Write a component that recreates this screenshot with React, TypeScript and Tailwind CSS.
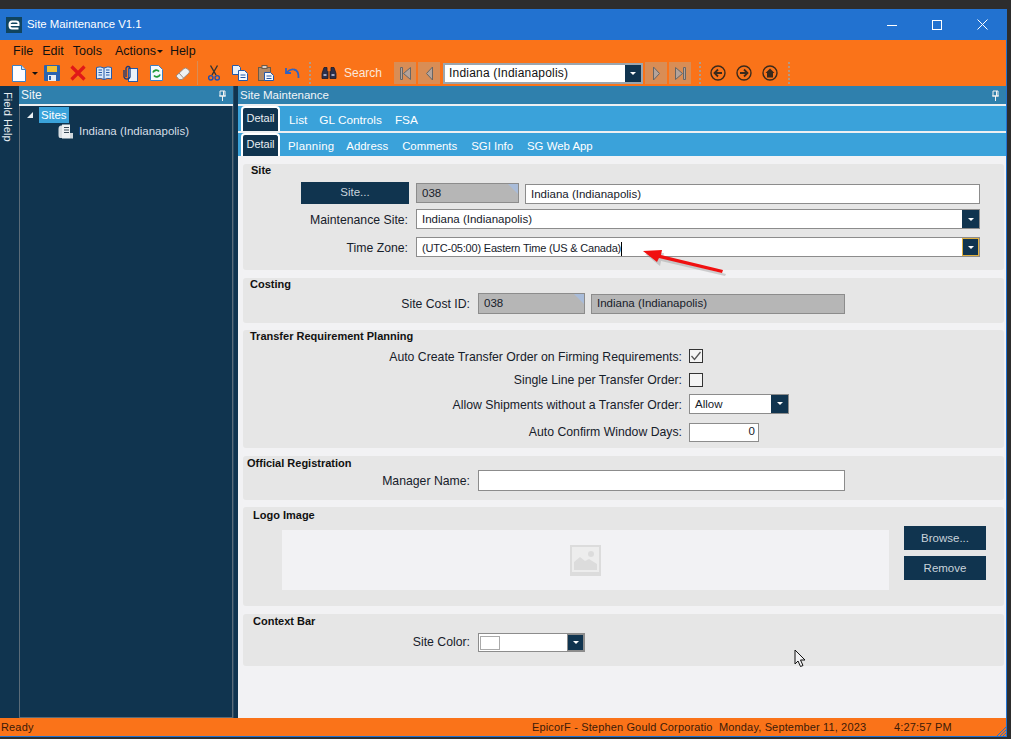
const navy = "bg-[#10344f]";

const Caret = ({ className = "border-t-white" }: { className?: string }) => (
  <span className={`block w-0 h-0 border-x-[3px] border-x-transparent border-t-[3px] ${className}`} />
);

const DropButton = ({ focus = false, className = "w-[17px]" }: { focus?: boolean; className?: string }) => (
  <span className={`flex items-center justify-center self-stretch shrink-0 ${navy} ${className} ${focus ? "border border-[#e0b040]" : ""}`}>
    <Caret />
  </span>
);

const Corner = () => (
  <span className="absolute top-0 right-0 w-0 h-0 border-l-[10px] border-l-transparent border-t-[10px] border-t-[#a9bcd9]" />
);

const Field = ({ text, className, gray = false, corner = false }: { text?: string; className: string; gray?: boolean; corner?: boolean }) => (
  <div className={`relative flex items-center shrink-0 border border-[#8c8c8c] pl-[5px] pt-[1px] text-[11.5px] ${gray ? "bg-[#b6b6b6]" : "bg-white"} ${className}`}>
    {text}
    {corner && <Corner />}
  </div>
);

const Combo = ({ text, className, focus = false, caret = false, textClass = "text-[11.5px]" }: { text?: string; className: string; focus?: boolean; caret?: boolean; textClass?: string }) => (
  <div className={`flex items-center shrink-0 border border-[#8c8c8c] bg-white ${className}`}>
    <span className={`flex-1 pl-[5px] pt-[1px] whitespace-nowrap ${textClass}`}>
      {text}
      {caret && <span className="inline-block w-px h-[14px] bg-black align-middle" />}
    </span>
    <DropButton focus={focus} />
  </div>
);

const Group = ({ title, className, titleClass, children }: { title: string; className: string; titleClass: string; children?: React.ReactNode }) => (
  <section className={`ml-[5px] w-[761px] bg-[#e6e6e6] rounded-[3px] shrink-0 text-[12.25px] ${className}`}>
    <h3 className={`font-bold text-[11px] leading-[13px] text-[#111] ${titleClass}`}>{title}</h3>
    {children}
  </section>
);

const Row = ({ label, labelWidth, className = "", labelClass = "pt-[2px]", children }: { label: string; labelWidth: string; className?: string; labelClass?: string; children: React.ReactNode }) => (
  <div className={`flex items-center ${className}`}>
    <span className={`text-right whitespace-nowrap shrink-0 ${labelWidth} ${labelClass}`}>{label}</span>
    {children}
  </div>
);

const Pin = () => (
  <svg width="9" height="11" viewBox="0 0 9 11" className="shrink-0">
    <path d="M2 1h5v5H2zM1 6h7M4.500 6v5M5.500 1v5" fill="none" stroke="#f2f2f2" strokeWidth="1" />
  </svg>
);

const Tab = ({ active = false, children, className = "" }: { active?: boolean; children: React.ReactNode; className?: string }) =>
  active ? (
    <div className={`flex items-center justify-center w-[39px] self-stretch ${navy} border-2 border-b-0 border-white rounded-t-[4px] text-[11px] text-[#e8eef2] pb-[3px] ${className}`}>
      {children}
    </div>
  ) : (
    <span className={`text-white whitespace-nowrap pt-[5px] ${className}`}>{children}</span>
  );

const NavBtn = ({ d, flip = false, className = "" }: { d: string; flip?: boolean; className?: string }) => (
  <span className={`flex items-center justify-center w-[22px] h-[22px] bg-[#d98d55] shrink-0 ${className}`}>
    <svg width="13" height="15" viewBox="0 0 13 15" className={flip ? "-scale-x-100" : ""}>
      <path d={d} fill="#b4a39a" stroke="#666" strokeWidth="1" />
    </svg>
  </span>
);

const CircleIcon = ({ children, className = "" }: { children: React.ReactNode; className?: string }) => (
  <svg width="16" height="16" viewBox="0 0 16 16" className={`shrink-0 ${className}`}>
    <circle cx="8" cy="8" r="7" fill="none" stroke="#3a2a1c" strokeWidth="1.400" />
    {children}
  </svg>
);

const Grip = ({ className = "" }: { className?: string }) => (
  <span className={`w-[2px] h-[22px] shrink-0 border-l-2 border-dotted border-[#b09a88] ${className}`} />
);

export default function App() {
  return (
    <div className="relative w-[1011px] h-[739px] overflow-hidden bg-[#2d2d2d] pt-[9px] font-['Liberation_Sans',sans-serif] text-[12px] text-[#16202a]">
      <div className="flex flex-col w-[1007px] h-[728px] border-r border-b border-[#2272d0] bg-[#f2f2f4]">
        {/* title bar */}
        <header className="flex items-center h-[31px] bg-[#2272d0] text-white shrink-0">
          <svg width="16" height="16" viewBox="0 0 16 16" className="ml-[6px]">
            <rect width="16" height="16" fill="#10445f" />
            <path d="M3 8h9.500V6.500Q12.500 4.500 10 4.500H6Q3.500 4.500 3.500 8T6 11.500h6.500" fill="none" stroke="#fff" strokeWidth="2" />
          </svg>
          <span className="ml-[5px] text-[11.400px]">Site Maintenance V1.1</span>
          <svg width="10" height="10" viewBox="0 0 10 10" className="ml-auto">
            <path d="M0 5.500h10" stroke="#fff" strokeWidth="1" />
          </svg>
          <svg width="10" height="10" viewBox="0 0 10 10" className="ml-[35px]">
            <rect x="0.500" y="0.500" width="9" height="9" fill="none" stroke="#fff" />
          </svg>
          <svg width="11" height="11" viewBox="0 0 11 11" className="ml-[35px] mr-[18px]">
            <path d="M0.500 0.500l10 10M10.500 0.500l-10 10" stroke="#fff" />
          </svg>
        </header>

        {/* menu */}
        <nav className="flex items-center h-[20px] bg-[#fa7319] text-[12.500px] text-[#111] shrink-0 pt-[3px]">
          <span className="ml-[13px]">File</span>
          <span className="ml-[9px]">Edit</span>
          <span className="ml-[9px]">Tools</span>
          <span className="ml-[13px]">Actions</span>
          <Caret className="ml-[1px] border-t-[#111]" />
          <span className="ml-[7px]">Help</span>
        </nav>

        {/* toolbar */}
        <div className="flex items-center h-[26px] bg-[#fa7319] shrink-0">
          <svg width="14" height="17" viewBox="0 0 14 17" className="ml-[12px] shrink-0">
            <path d="M0.500 0.500h9l4 4v12H0.500z" fill="#fdfdff" stroke="#3b7fc4" />
            <path d="M9.500 0.500v4h4" fill="#cfe2f5" stroke="#3b7fc4" />
          </svg>
          <Caret className="ml-[6px] border-t-[#111]" />
          <svg width="16" height="16" viewBox="0 0 16 16" className="ml-[6px] shrink-0">
            <rect width="16" height="16" rx="1" fill="#2a64b0" />
            <rect x="3" y="1" width="10" height="6" fill="#f5c030" />
            <rect x="4" y="10" width="8" height="6" fill="#e8eef5" />
            <rect x="5" y="11" width="2" height="4" fill="#2a64b0" />
          </svg>
          <svg width="16" height="16" viewBox="0 0 16 16" className="ml-[10px] shrink-0">
            <path d="M1.500 1.500l13 13M14.500 1.500l-13 13" stroke="#e01818" strokeWidth="3.200" />
          </svg>
          <svg width="16" height="14" viewBox="0 0 16 14" className="ml-[10px] shrink-0">
            <path d="M8 2Q4 0 .5 1.500V13Q4 11.500 8 13.500Q12 11.500 15.500 13V1.500Q12 0 8 2z" fill="#d8e8f8" stroke="#2559a8" />
            <path d="M8 2v11M2.500 4h3.500M2.500 6.500h3.500M2.500 9h3.500M10 4h3.500M10 6.500h3.500M10 9h3.500" stroke="#2559a8" />
          </svg>
          <svg width="15" height="17" viewBox="0 0 15 17" className="ml-[11px] shrink-0">
            <rect x="5.500" y="3.500" width="9" height="13" fill="#eaf2fb" stroke="#2559a8" />
            <path d="M3 12V3.500a2 2 0 0 1 4 0V12a3.200 3.200 0 0 1-6 0V5" fill="none" stroke="#14387a" strokeWidth="1.300" />
          </svg>
          <svg width="13" height="16" viewBox="0 0 13 16" className="ml-[12px] shrink-0">
            <path d="M0.500 0.500h8l4 4v11H0.500z" fill="#f5f9fd" stroke="#3b7fc4" />
            <path d="M3 7.500a3.500 3.500 0 0 1 6-1M10 9.500a3.500 3.500 0 0 1-6 1" fill="none" stroke="#1e9a3a" strokeWidth="1.800" />
          </svg>
          <svg width="15" height="13" viewBox="0 0 15 13" className="ml-[12px] shrink-0">
            <path d="M1 9l8-7.500q1.500-1 3 0l2 2q1 1.500 0 2.500L7 12.500H4z" fill="#eef0f2" stroke="#9a8a80" />
            <path d="M4 6l4.500 5" stroke="#9a8a80" />
          </svg>
          <span className="ml-[7px] w-px h-[24px] bg-[#d98d55] shrink-0" />
          <svg width="12" height="16" viewBox="0 0 12 16" className="ml-[10px] shrink-0">
            <path d="M2.500 0.500L8 10M9.500 0.500L4 10" stroke="#333" strokeWidth="1.400" />
            <circle cx="2.800" cy="12.800" r="2.200" fill="none" stroke="#1b4fb5" strokeWidth="1.400" />
            <circle cx="9.200" cy="12.800" r="2.200" fill="none" stroke="#1b4fb5" strokeWidth="1.400" />
          </svg>
          <svg width="16" height="16" viewBox="0 0 16 16" className="ml-[12px] shrink-0">
            <path d="M0.500 0.500h6l2 2v7h-8z" fill="#e8f1fb" stroke="#2559a8" />
            <path d="M6.500 5.500h6l3 3v7h-9z" fill="#f5f9fd" stroke="#2559a8" />
            <path d="M8.500 10h5M8.500 12.500h5" stroke="#2559a8" />
          </svg>
          <svg width="16" height="16" viewBox="0 0 16 16" className="ml-[10px] shrink-0">
            <rect x="0.500" y="2.500" width="12" height="13" fill="#b08a68" stroke="#6a5a4a" />
            <rect x="4" y="0.500" width="5" height="3" fill="#d8d0c8" stroke="#6a5a4a" />
            <path d="M6.500 7.500h6l3 3v5h-9z" fill="#f5f9fd" stroke="#2559a8" />
            <path d="M8.500 11h5M8.500 13.500h5" stroke="#2559a8" />
          </svg>
          <svg width="15" height="12" viewBox="0 0 15 12" className="ml-[11px] shrink-0">
            <path d="M1 1v5h5M1.500 5.500Q5 1.500 9 2.500q5 1 4.500 8.500" fill="none" stroke="#2f62c4" strokeWidth="1.800" />
          </svg>
          <Grip className="ml-[9px]" />
          <svg width="16" height="14" viewBox="0 0 16 14" className="ml-[10px] shrink-0">
            <path d="M3 1.500h3v3l1 1v7H1v-5zM13 1.500h-3v3l-1 1v7h6v-5z" fill="#2d2f4a" stroke="#1a1a2a" strokeWidth="0.800" />
            <path d="M2.500 9h3M10.500 9h3" stroke="#c8d0ea" strokeWidth="1.400" />
          </svg>
          <span className="ml-[7px] w-[38px] whitespace-nowrap text-[12px] text-[#fbe9dc]">Search</span>
          <NavBtn className="ml-[12px]" d="M1.500 1.500h2v12h-2zM11.500 1.500v12L4.500 7.500z" />
          <NavBtn className="ml-[2px]" d="M9.500 1v13L3.500 7.500z" />
          <div className="flex items-center ml-[3px] w-[200px] h-[21px] border-2 border-[#9aa6b0] bg-white text-[#111] shrink-0">
            <span className="flex-1 pl-[4px] tracking-[0.2px]">Indiana (Indianapolis)</span>
            <DropButton className="w-[16px]" />
          </div>
          <NavBtn className="ml-[2px]" flip d="M9.500 1v13L3.500 7.500z" />
          <NavBtn className="ml-[2px]" flip d="M1.500 1.500h2v12h-2zM11.500 1.500v12L4.500 7.500z" />
          <Grip className="ml-[8px]" />
          <CircleIcon className="ml-[9px]">
            <path d="M12 8H5M8 4.500L4.500 8 8 11.500" fill="none" stroke="#3a2a1c" strokeWidth="1.800" />
          </CircleIcon>
          <CircleIcon className="ml-[10px]">
            <path d="M4 8h7M8 4.500L11.500 8 8 11.500" fill="none" stroke="#3a2a1c" strokeWidth="1.800" />
          </CircleIcon>
          <CircleIcon className="ml-[10px]">
            <path d="M8 3.500L3.500 8H5v4.500h6V8h1.500z" fill="#3a2a1c" />
          </CircleIcon>
          <Grip className="ml-[10px]" />
        </div>

        {/* panes */}
        <div className="flex flex-1 min-h-0">
          <aside className={`w-[19px] shrink-0 ${navy} text-[11px] text-[#e8eef2] pt-[6px]`}>
            <span className="block [writing-mode:vertical-rl] whitespace-nowrap -ml-[1px]">Field Help</span>
          </aside>

          <div className="flex flex-col w-[214px] shrink-0">
            <div className="flex items-center justify-between h-[18px] bg-[#2f80ad] text-[#f2f5f8] pl-[2px] pr-[6px] shrink-0">
              <span>Site</span>
              <Pin />
            </div>
            <div className="h-[2px] bg-[#eef0f2] shrink-0" />
            <div className={`flex-1 ${navy} border border-t-0 border-[#5a6b78] text-[11.500px] text-[#d5dee6]`}>
              <div className="flex items-center h-[17px]">
                <span className="ml-[7px] w-0 h-0 border-l-[6px] border-l-transparent border-b-[6px] border-b-[#e8eef2]" />
                <span className="ml-[6px] bg-[#3aa2da] text-white px-[2px] h-[16px] leading-[16px] text-[11.500px]">Sites</span>
              </div>
              <div className="flex items-center h-[16px]">
                <svg width="15" height="15" viewBox="0 0 15 15" className="ml-[38px]">
                  <path d="M0.500 5Q0.500 1 4 1.500V14H2Q0.500 14 0.500 11z" fill="#d8dde2" />
                  <rect x="4" y="0.500" width="8" height="14" fill="#eef1f4" />
                  <path d="M6 3.500h5M6 6h5M6 8.500h5" stroke="#3a4a58" />
                  <rect x="12" y="9" width="3" height="5.500" fill="#cfd5da" />
                </svg>
                <span className="ml-[6px] pt-[2px]">Indiana (Indianapolis)</span>
              </div>
            </div>
          </div>

          <div className={`w-[5px] shrink-0 ${navy} border-l border-[#2a4a62]`} />

          <main className="flex flex-col flex-1 min-w-0 bg-[#f2f2f4]">
            <div className="flex items-center justify-between h-[18px] bg-[#2f80ad] text-[11.500px] text-[#f2f5f8] pl-[2px] pr-[6px] pt-[1px] shrink-0">
              <span>Site Maintenance</span>
              <Pin />
            </div>
            <div className="h-[2px] bg-[#eef0f2] shrink-0" />

            <div className="flex items-center h-[25px] bg-[#3aa2da] pl-[3px] text-[11.800px] shrink-0">
              <Tab active>Detail</Tab>
              <Tab className="ml-[9px]">List</Tab>
              <Tab className="ml-[12px]">GL Controls</Tab>
              <Tab className="ml-[13px]">FSA</Tab>
            </div>
            <div className="h-[2px] bg-[#eef0f2] shrink-0" />
            <div className="flex items-center h-[23px] bg-[#3aa2da] pl-[3px] text-[11.400px] shrink-0">
              <Tab active>Detail</Tab>
              <Tab className="ml-[8px] tracking-[0.25px]">Planning</Tab>
              <Tab className="ml-[12px]">Address</Tab>
              <Tab className="ml-[14px]">Comments</Tab>
              <Tab className="ml-[14px]">SGI Info</Tab>
              <Tab className="ml-[14px]">SG Web App</Tab>
            </div>

            <Group title="Site" className="mt-[8px] h-[106px]" titleClass="ml-[8px]">
              <div className="flex items-center ml-[58px] mt-[5px]">
                <span className={`flex items-center justify-center w-[108px] h-[22px] ${navy} text-[11.500px] text-[#c9d3db]`}>Site...</span>
                <Field text="038" gray corner className="ml-[7px] w-[103px] h-[20px]" />
                <Field text="Indiana (Indianapolis)" className="ml-[6px] w-[455px] h-[20px] mt-[2px]" />
              </div>
              <Row label="Maintenance Site:" labelWidth="w-[165px]" className="mt-[5px]">
                <Combo text="Indiana (Indianapolis)" className="ml-[8px] w-[564px] h-[20px]" />
              </Row>
              <Row label="Time Zone:" labelWidth="w-[165px]" className="mt-[8px]" labelClass="pt-[1px]">
                <Combo text="(UTC-05:00) Eastern Time (US & Canada)" caret focus textClass="text-[11px] tracking-[-0.2px]" className="ml-[8px] w-[564px] h-[20px]" />
              </Row>
            </Group>

            <Group title="Costing" className="mt-[8px] h-[45px]" titleClass="ml-[7px]">
              <Row label="Site Cost ID:" labelWidth="w-[227px]" className="mt-[2px]">
                <Field text="038" gray corner className="ml-[8px] w-[107px] h-[21px]" />
                <Field text="Indiana (Indianapolis)" gray className="ml-[6px] w-[254px] h-[20px]" />
              </Row>
            </Group>

            <Group title="Transfer Requirement Planning" className="mt-[7px] h-[118px]" titleClass="ml-[7px]">
              <Row label="Auto Create Transfer Order on Firming Requirements:" labelWidth="w-[439px]" labelClass="pt-[4px]" className="mt-[5px] h-[15px]">
                <span className="flex items-center justify-center ml-[7px] w-[14px] h-[14px] border border-[#333] bg-[#f4f4f4]">
                  <svg width="12" height="10" viewBox="0 0 12 10">
                    <path d="M1.500 5l3 3.500L10.500 1" fill="none" stroke="#555" strokeWidth="1.300" />
                  </svg>
                </span>
              </Row>
              <Row label="Single Line per Transfer Order:" labelWidth="w-[439px]" className="mt-[9px] h-[15px]">
                <span className="ml-[7px] w-[14px] h-[14px] border border-[#333] bg-[#f4f4f4]" />
              </Row>
              <Row label="Allow Shipments without a Transfer Order:" labelWidth="w-[439px]" labelClass="pt-[3px]" className="mt-[6px]">
                <Combo text="Allow" className="ml-[7px] w-[100px] h-[20px]" />
              </Row>
              <Row label="Auto Confirm Window Days:" labelWidth="w-[439px]" labelClass="pt-[1px]" className="mt-[8px]">
                <div className="flex items-center justify-end ml-[7px] w-[70px] h-[19px] border border-[#8c8c8c] bg-white pr-[3px] text-[11.500px]">0</div>
              </Row>
            </Group>

            <Group title="Official Registration" className="mt-[8px] h-[44px]" titleClass="ml-[4px] pt-[1px]">
              <Row label="Manager Name:" labelWidth="w-[227px]">
                <Field className="ml-[8px] w-[367px] h-[21px]" />
              </Row>
            </Group>

            <Group title="Logo Image" className="mt-[7px] h-[99px] pt-[2px]" titleClass="ml-[10px]">
              <div className="flex mt-[4px]">
                <div className="flex items-center justify-center ml-[39px] mt-[4px] w-[607px] h-[60px] bg-[#f2f2f4]">
                  <svg width="31" height="31" viewBox="0 0 31 31">
                    <rect width="31" height="31" fill="#dcdcdc" />
                    <rect x="2" y="2" width="27" height="25" fill="#ededed" />
                    <path d="M4 25v-8l6-5 5 4 4-2 8 5v6z" fill="#dcdcdc" />
                    <circle cx="21" cy="9" r="3" fill="#dcdcdc" />
                  </svg>
                </div>
                <div className="flex flex-col ml-[15px] gap-[6px] text-[11.500px] text-[#c9d3db]">
                  <span className={`flex items-center justify-center w-[82px] h-[24px] pt-[1px] ${navy}`}>Browse...</span>
                  <span className={`flex items-center justify-center w-[82px] h-[24px] pt-[1px] ${navy}`}>Remove</span>
                </div>
              </div>
            </Group>

            <Group title="Context Bar" className="mt-[8px] h-[52px] pt-[1px]" titleClass="ml-[10px]">
              <Row label="Site Color:" labelWidth="w-[227px]" className="mt-[5px]" labelClass="">
                <div className="flex items-center ml-[8px] w-[107px] h-[19px] border border-[#8c8c8c] bg-white">
                  <span className="ml-[1px] w-[20px] h-[14px] bg-white border border-[#aaa]" />
                  <span className="flex-1" />
                  <span className="flex self-stretch border border-[#8c8c8c]">
                    <DropButton className="w-[15px]" />
                  </span>
                </div>
              </Row>
            </Group>
          </main>
        </div>

        {/* status bar */}
        <footer className="relative flex items-center h-[18px] bg-[#fa7319] text-[11px] tracking-[0.15px] text-[#3a1a08] shrink-0">
          <span className="ml-[1px]">Ready</span>
          <span className="absolute left-[532px] whitespace-nowrap">EpicorF - Stephen Gould Corporatio</span>
          <span className="absolute left-[719px] whitespace-nowrap">Monday, September 11, 2023</span>
          <span className="absolute left-[894px] whitespace-nowrap">4:27:57 PM</span>
          <svg width="10" height="10" viewBox="0 0 10 10" className="absolute right-0 bottom-0">
            <path d="M10 1L1 10M10 4L4 10M10 7L7 10" stroke="#2272d0" />
          </svg>
        </footer>
      </div>

      {/* annotation arrow */}
      <svg width="90" height="30" viewBox="0 0 90 30" className="absolute left-[640px] top-[247px]">
        <path d="M85 25L22 9l1-5L4 5l15 12 1-5 64 15z" fill="#888" opacity="0.35" transform="translate(1 2)" />
        <path d="M83 23L21 8l1-5L3 4l14 11 2-4 63 15z" fill="#f01010" />
      </svg>

      {/* mouse pointer */}
      <svg width="12" height="19" viewBox="0 0 12 19" className="absolute left-[794px] top-[649px]">
        <path d="M1 1v14l3-3 2.500 5.500 2.500-1L6.500 11H11z" fill="#f2f2f4" stroke="#111" />
      </svg>
    </div>
  );
}
